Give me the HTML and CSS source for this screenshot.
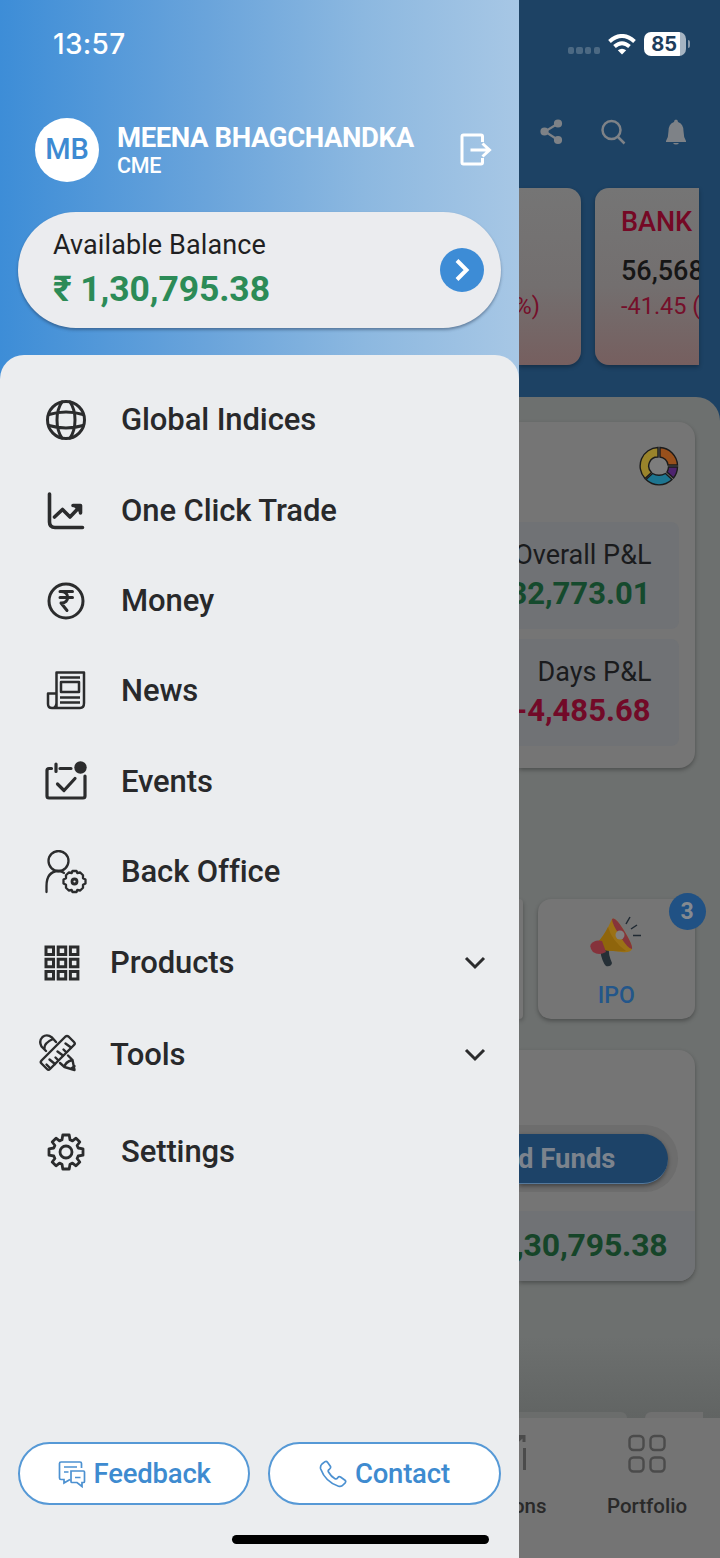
FILE: index.html
```
<!DOCTYPE html>
<html lang="en">
<head>
<meta charset="utf-8">
<title>Menu</title>
<link rel="stylesheet" href="styles.css">
</head>
<body>
<div class="phone">
  <aside class="drawer">
    <div class="time">13:57</div>
    <header class="profile">
      <div class="avatar">MB</div>
      <div class="who">
        <div class="name">MEENA BHAGCHANDKA</div>
        <div class="code">CME</div>
      </div>
      <svg class="logout" viewBox="0 0 32 34" fill="none" stroke="#fff" stroke-width="3"><path d="M22.500 9V3.500Q22.500 2 21 2H3.500Q2 2 2 3.500V29.500Q2 31 3.500 31H21Q22.500 31 22.500 29.500V25M10.500 17H29M22.500 10.500L29.500 17L22.500 23.500"/></svg>
    </header>
    <section class="balance">
      <div>
        <div class="balance-label">Available Balance</div>
        <div class="balance-value"><span class="rupee">₹</span> 1,30,795.38</div>
      </div>
      <div class="go"><svg width="44" height="44" viewBox="0 0 44 44" fill="none" stroke="#fff" stroke-width="4"><path d="M17 12.500L26.500 22L17 31.500"/></svg></div>
    </section>
    <nav class="menu">
      <a class="item"><svg class="icon" viewBox="0 0 44 44"><g stroke-width="3"><circle cx="22" cy="22" r="18.500"/><path d="M18 4Q13 11 13 22T18 40M26 4Q31 11 31 22T26 40M5 16.500Q22 11.500 39 16.500M5 27.500Q22 32.500 39 27.500"/></g></svg><span>Global Indices</span></a>
      <a class="item"><svg class="icon" viewBox="0 0 44 44"><g stroke-width="3.600"><path d="M5.500 5V33Q5.500 38.500 11 38.500H38.500M10.500 28L18.500 20.500L26 28L36 17.500M29 16.500H36.500V24"/><path d="M32 17.500L36 21.500" /></g></svg><span>One Click Trade</span></a>
      <a class="item"><svg class="icon" viewBox="0 0 44 44"><g stroke-width="3"><circle cx="22" cy="22" r="17"/><path d="M16 12.500H28.500M16 18.500H28.500M16.500 12.500C26 12 26 24.500 17 24L23 31.500"/></g></svg><span>Money</span></a>
      <a class="item"><svg class="icon" viewBox="0 0 44 44"><g stroke-width="2.500" stroke-linecap="butt"><path d="M12.500 38V3.500H40V34Q40 39 36 39H8Q4 39 4 35V24.500H12M12.500 34Q12 39 8 39"/><path d="M16 8.500H36M16 28.500H36M16 33.500H36"/><rect x="17" y="13" width="18" height="10"/></g></svg><span>News</span></a>
      <a class="item"><svg class="icon" viewBox="0 0 44 44"><g stroke-width="3.200"><path d="M7.500 8.500H5Q3 8.500 3 10.500V36Q3 38 5 38H39Q41 38 41 36V16M16 8.500H27M12 4V11.500"/><path d="M13.500 24L20 30.500L31 18.500"/></g><circle class="solid" cx="36.500" cy="7.500" r="6.200"/></svg><span>Events</span></a>
      <a class="item"><svg class="icon" viewBox="0 0 44 44"><g stroke-width="2.300"><circle cx="14.500" cy="11" r="10"/><path d="M2.500 42V36Q2.500 21.500 14.500 21Q18 21 20 23"/><circle cx="30.500" cy="31.500" r="2.500" stroke-width="2.800"/><path d="M28.500 21H32.500L33.300 23L36.200 22.500L39 25.300L39 28.200L41.500 29.500V33.500L39 34.800L39 37.700L36.200 40.500L33.300 40L32.500 42H28.500L27.700 40L24.800 40.500L22 37.700L22 34.800L19.500 33.500V29.500L22 28.200L22 25.300L24.800 22.500L27.700 23Z"/></g></svg><span>Back Office</span></a>
      <a class="item group"><svg class="icon" viewBox="0 0 44 44"><g stroke-width="3" stroke-linejoin="miter"><path d="M6 6h7.500v7.500h-7.500zM18.200 6h7.500v7.500h-7.500zM30.400 6h7.500v7.500h-7.500zM6 18.200h7.500v7.500h-7.500zM18.200 18.200h7.500v7.500h-7.500zM30.400 18.200h7.500v7.500h-7.500zM6 30.400h7.500v7.500h-7.500zM18.200 30.400h7.500v7.500h-7.500zM30.400 30.400h7.500v7.500h-7.500z"/></g></svg><span>Products</span><svg class="chev" viewBox="0 0 24 16"><path d="M3 3L12 12L21 3"/></svg></a>
      <a class="item group tools"><svg class="icon" viewBox="0 0 44 44"><g stroke-width="2.400"><path d="M29.500 3.500Q31 2.500 32.500 3.500L38 9Q39.500 10.500 38 12L14 36Q12.500 37.500 11 36L5.500 30.500Q4 29 5.500 27.500Z"/><path d="M14 35L10.500 31.500M19 31L13.500 26.500M22 27L19.500 24.500M27 22.500L21.500 18.500M30 19L27.500 16.500M35 14.500L29.500 10.500"/><path d="M10 18L5.500 13.500Q2.500 8 6.500 4Q11 0.500 16 4.500L20 9M8.500 15.500Q8 10 17 6"/><path d="M24 30L28.500 34L38.500 37L36.500 27L32 22.500M28.500 34Q29 29 36.500 27M35 36L38.500 33"/></g></svg><span>Tools</span><svg class="chev" viewBox="0 0 24 16"><path d="M3 3L12 12L21 3"/></svg></a>
      <a class="item last"><svg class="icon" viewBox="0 0 44 44"><g stroke-width="2.800"><circle cx="22" cy="22" r="6"/><path d="M18.800 5H25.200L26 9.800L28.500 10.900L32 8.200L35.800 12L33.100 15.500L34.200 18L39 18.800V25.200L34.200 26L33.100 28.500L35.800 32L32 35.800L28.500 33.100L26 34.200L25.200 39H18.800L18 34.200L15.500 33.100L12 35.800L8.200 32L10.900 28.500L9.800 26L5 25.200V18.800L9.800 18L10.900 15.500L8.200 12L12 8.200L15.500 10.900L18 9.800Z"/></g></svg><span>Settings</span></a>
      <div class="actions">
        <button class="pill"><svg width="28" height="28" viewBox="0 0 28 28"><path d="M12 19.500L6 23V19.500H3Q1.500 19.500 1.500 18V3.500Q1.500 2 3 2H22Q23.500 2 23.500 3.500V8M6 7H19M6 12H10.500M13 11H25.500Q26.500 11 26.500 12V21.500Q26.500 22.500 25.500 22.500H24V26.500L19 22.500H14Q13 22.500 13 21.500ZM17 17.500H22.500"/></svg>Feedback</button>
        <button class="pill"><svg width="28" height="28" viewBox="0 0 28 28"><path d="M3 4L6 1.700Q7.500 1 8.500 2.300L11.500 6.500Q12 8 10.500 9.200Q8.500 10.500 9.500 12Q12 16.500 16 18.700Q17.500 19.500 18.700 17.700Q20 16 21.500 17L26 20.200Q27.300 21.500 26.200 22.800L24 25Q22.500 27 19.500 26.200Q6.500 22 1.700 9Q0.900 6 3 4Z"/></svg>Contact</button>
      </div>
      <div class="home-bar"></div>
    </nav>
  </aside>

  <main class="page">
    <section class="top">
      <div class="status">
        <div class="dots"><i></i><i></i><i></i><i></i></div>
        <svg width="28" height="21" viewBox="0 0 28 21" fill="none" stroke="#fff" stroke-width="4"><path d="M1.500 7.500Q14 -3.500 26.500 7.500M6.500 12.500Q14 6 21.500 12.500"/><path d="M14 20.500L9.800 16.300Q14 13 18.200 16.300Z" fill="#fff" stroke="none"/></svg>
        <div class="battery">85</div><div class="tip"></div>
      </div>
      <div class="tools-row">
        <svg width="24" height="26" viewBox="0 0 24 26" fill="#7e8287" stroke="#7e8287" stroke-width="2.200"><path d="M18 4.500L5 12.500L18 21" fill="none"/><circle cx="18" cy="4.500" r="3"/><circle cx="4.500" cy="12.500" r="3"/><circle cx="18" cy="21" r="3"/></svg>
        <svg width="26" height="26" viewBox="0 0 26 26" fill="none" stroke="#7e8287" stroke-width="2.500"><circle cx="11.500" cy="11" r="9"/><path d="M17.500 17.500L24.500 24.500"/></svg>
        <svg width="22" height="26" viewBox="0 0 22 26" fill="#7e8287"><path d="M11 0.500Q13 0.500 13 3Q18.500 5 18.500 12Q18.500 18 21 22V23H1V22Q3.500 18 3.500 12Q3.500 5 9 3Q9 0.500 11 0.500ZM8 24H14Q13 25.500 11 25.500Q9 25.500 8 24Z"/></svg>
      </div>
      <div class="indices">
        <div class="index first"><span>%)</span></div>
        <div class="index second"><b>BANK</b><strong>56,568</strong><span>-41.45 (</span></div>
      </div>
    </section>
    <section class="content">
      <div class="card pnl">
        <svg class="donut" viewBox="0 0 40 40" stroke="#1b1b1b" stroke-width="1.400"><circle cx="20" cy="20" r="9.500" fill="#7d7d7d" stroke="none"/><path fill="#98501c" d="M21 1.500A18.500 18.500 0 0 1 38.500 19H29A9 9 0 0 0 21 11Z"/><path fill="#4d236e" d="M38.500 21A18 18 0 0 1 34.500 32L28 26Q29.500 23.500 29.500 21Z"/><path fill="#1d7590" d="M33 33.500A18.500 18.500 0 0 1 7 33.500L13.500 27.500Q20 31 26.500 27.500Z"/><path fill="#9a842b" d="M6 32.500A18.500 18.500 0 0 1 19 1.500V11A9 9 0 0 0 12.500 26.500Z"/></svg>
        <div class="box"><span>Overall P&amp;L</span><b class="green">32,773.01</b></div>
        <div class="box"><span>Days P&amp;L</span><b class="red">-4,485.68</b></div>
      </div>
      <div class="tiles">
        <div class="card stub"></div>
        <div class="card ipo">
          <svg width="52" height="52" viewBox="0 0 52 52"><path d="M10 34L19 32Q18 38 22 47Q21 51 16 50Q12 46 10 34Z" fill="#252f36"/><path d="M22 3Q25 0 33 13Q43 29 42 33Q40 37 32 36Q14 34 9 33L7 27Q15 19 22 3Z" fill="#9b7116"/><path d="M18 11Q22 25 36 35Q20 36 9 33L7 27Q14 20 18 11Z" fill="#8f650c"/><path d="M22 3Q25 0 33 13Q43 29 42 33Q38 33 30 20Q22 8 22 3Z" fill="#86343a"/><circle cx="30" cy="19" r="4.500" fill="#828080"/><path d="M1 28Q5 23 12 25L16 36Q9 40 3 36Q-1 31 1 28Z" fill="#85323b"/><g stroke="#202a33" stroke-width="1.500"><path d="M36 8L40 1M41 13L47 9M43 19.500H51"/></g></svg>
          <span>IPO</span>
          <div class="badge">3</div>
        </div>
      </div>
      <div class="card funds">
        <div class="ring"><div class="add">Add Funds</div></div>
        <div class="amount">₹ 1,30,795.38</div>
      </div>
      <div class="peek"><div class="peek-a"></div><div class="peek-b"></div></div>
    </section>
    <footer class="tabs">
      <div class="tab positions"><svg width="46" height="42" viewBox="0 0 46 42" fill="none" stroke="#4b4b4b" stroke-width="3"><path d="M4 40V28M17 40V24M30 40V26M43.500 40V18M4 24L18 15L27 20L41 7M36 6.500H43V12"/></svg><span>Positions</span></div>
      <div class="tab portfolio"><svg width="40" height="40" viewBox="0 0 40 40" fill="none" stroke="#4b4b4b" stroke-width="2.400"><rect x="2.500" y="2" width="14" height="14" rx="4"/><rect x="23.500" y="2" width="14" height="14" rx="4"/><rect x="2.500" y="23.500" width="14" height="14" rx="4"/><rect x="23.500" y="23.500" width="14" height="14" rx="4"/></svg><span>Portfolio</span></div>
    </footer>
  </main>
</div>
</body>
</html>
```
FILE: styles.css
```
* { box-sizing: border-box; }
body { margin: 0; font-family: Roboto, "Liberation Sans", sans-serif; }
svg { flex: none; display: block; }
.phone { display: flex; width: 720px; height: 1558px; overflow: hidden; }

/* Drawer */
.drawer { width: 518.5px; flex: none; display: flex; flex-direction: column; background: linear-gradient(90deg, #3d8dd7 0, #6aa4db 40%, #8cb8e0 70%, #a7c7e5 100%); }
.time { height: 88px; padding-left: 53px; font: 500 28px/88px Inter, sans-serif; color: #fff; letter-spacing: .3px; }
.profile { display: flex; align-items: center; height: 124px; padding: 0 27px 0 35px; color: #fff; }
.avatar { width: 64px; height: 64px; border-radius: 50%; background: #fff; color: #3d8ad2; font-size: 29px; font-weight: 500; line-height: 62px; text-align: center; }
.who { flex: 1; padding: 1px 0 0 18px; white-space: nowrap; }
.name { font-size: 27.500px; font-weight: 700; line-height: 30px; letter-spacing: -.4px; }
.code { font-size: 21.500px; font-weight: 500; line-height: 26px; letter-spacing: -.3px; }
.logout { width: 32px; height: 34px; }
.balance { display: flex; align-items: center; justify-content: space-between; height: 116px; margin: 0 18px 27px; padding: 0 17px 0 35px; border-radius: 58px; background: #ebecef; box-shadow: 0 2px 3px rgba(30, 50, 80, .45); }
.balance-label { padding-top: 2px; font-size: 27px; line-height: 36px; color: #1f1f22; letter-spacing: .1px; }
.balance-value { font-size: 35.500px; font-weight: 700; line-height: 52px; color: #2c8b57; letter-spacing: -.1px; }
.go { width: 44px; height: 44px; border-radius: 50%; background: #3d8cd6; }

.menu { flex: 1; display: flex; flex-direction: column; padding-top: 20px; border-radius: 24px 24px 0 0; background: #ebedef; }
.item { display: flex; align-items: center; height: 90.400px; padding-left: 44px; font-size: 31px; font-weight: 500; color: #28292b; letter-spacing: -.1px; }
.item span { flex: 1; padding-left: 33px; line-height: 36px; }
.icon { width: 44px; height: 44px; fill: none; stroke: #2b2c2d; stroke-linecap: round; stroke-linejoin: round; }
.icon .solid { fill: #2b2c2d; stroke: none; }
.item.group { height: 92px; padding: 0 32px 0 40px; }
.item.group span { padding-left: 26px; }
.item.tools { padding-left: 36px; }
.item.tools span { padding-left: 30px; }
.item.last { height: 101px; }
.chev { width: 24px; height: 16px; fill: none; stroke: #2b2c2d; stroke-width: 3; }
.actions { display: flex; gap: 18px; margin: auto 18px 0; }
.pill { flex: 1; display: flex; align-items: center; justify-content: center; gap: 8px; height: 63px; padding: 0; border: 2px solid #5699d6; border-radius: 32px; background: #fff; font: 500 27.500px Roboto, sans-serif; color: #3e8bd0; letter-spacing: -.2px; }
.pill svg { fill: none; stroke: #4c91d1; stroke-width: 1.700; }
.home-bar { width: 257px; height: 9px; margin: 30px 0 14px 231.5px; border-radius: 5px; background: #000; }

/* Dimmed page */
.page { flex: 1; min-width: 0; display: flex; flex-direction: column; background: #1d4264; overflow: hidden; }
.top { height: 397px; flex: none; }
.status { display: flex; align-items: center; height: 88px; padding-left: 49px; }
.dots { display: flex; gap: 2.500px; padding-top: 13px; margin-right: 8px; }
.dots i { width: 6.300px; height: 6.300px; border-radius: 2px; background: #4c6983; }
.battery { width: 42px; height: 24px; margin-left: 8px; border-radius: 7px; background: linear-gradient(90deg, #fff 36px, #a6b4c2 36px); font: 700 20px/25px Inter, sans-serif; color: #1d3d5c; padding-left: 7px; }
.tip { width: 2.500px; height: 8px; margin-left: 1.500px; border-radius: 0 4px 4px 0; background: #8698aa; }
.tools-row { display: flex; align-items: center; height: 88px; padding-left: 21px; }
.tools-row svg + svg { margin-left: 36px; }
.tools-row svg:last-child { margin-left: 39px; }
.indices { display: flex; gap: 14.500px; margin-top: 12px; height: 177px; }
.index { overflow: hidden; display: flex; flex-direction: column; white-space: nowrap; background: linear-gradient(#757575 0, #736f6f 55%, #765f5f 100%); box-shadow: 0 2px 4px rgba(0, 0, 0, .3); }
.index span { font-size: 23.500px; line-height: 32px; color: #750f2a; }
.index.first { width: 62px; border-radius: 0 14px 14px 0; }
.index.first span { display: flex; justify-content: flex-end; width: 21.500px; padding-top: 102px; }
.index.second { width: 104px; padding: 17px 0 0 26px; border-radius: 14px 0 0 14px; }
.index b { font-size: 27px; font-weight: 500; line-height: 34px; color: #750825; }
.index strong { padding-top: 15px; font-size: 27px; font-weight: 500; line-height: 34px; color: #161616; }
.index strong + span { padding-top: 2px; }
.content { flex: 1; padding: 25px 25.500px 0 0; border-radius: 0 24px 0 0; background: linear-gradient(#6d706f 92%, #616463 100%); display: flex; flex-direction: column; }
.card { background: #757575; border-radius: 0 16px 16px 0; box-shadow: 0 2px 4px rgba(0, 0, 0, .3); }
.pnl { height: 346px; padding: 24px 16px 0 0; }
.donut { width: 40px; height: 40px; margin: 0 0 36px auto; }
.box { display: flex; flex-direction: column; align-items: flex-end; height: 107px; margin-bottom: 10px; padding: 15px 27px 0 0; border-radius: 0 8px 8px 0; background: #707275; white-space: nowrap; }
.box span { font-size: 27px; line-height: 36px; color: #1a1b1d; }
.box b { padding-right: 1px; font-size: 31px; line-height: 42px; }
.green { color: #154a2d; }
.red { color: #720a28; }
.tiles { display: flex; gap: 15px; height: 120px; margin-top: 131px; }
.stub { width: 4.500px; border-radius: 0 12px 12px 0; }
.ipo { position: relative; flex: 1; display: flex; flex-direction: column; align-items: center; padding-top: 17px; border-radius: 13px; }
.ipo span { margin-top: 12px; font-size: 23px; font-weight: 500; line-height: 32px; color: #23568a; }
.badge { position: absolute; top: -6px; right: -11px; width: 37px; height: 37px; border-radius: 50%; background: #205184; color: #858a90; font-size: 23px; font-weight: 700; line-height: 37px; text-align: center; }
.funds { display: flex; flex-direction: column; height: 231px; margin-top: 31px; padding-top: 75px; overflow: hidden; }
.ring { display: flex; align-items: center; height: 67px; margin-right: 17px; padding-right: 10px; border-radius: 0 34px 34px 0; background: #6d6d6d; }
.add { flex: 1; min-width: 0; display: flex; justify-content: flex-end; height: 50px; padding-right: 52px; border-radius: 0 25px 25px 0; border-bottom: 1px solid #55799c; background: #1d4368; color: #7c838d; font-size: 27.500px; font-weight: 700; line-height: 49px; white-space: nowrap; box-shadow: 0 2px 4px rgba(0, 0, 0, .4); }
.amount { flex: 1; display: flex; justify-content: flex-end; margin-top: 19px; padding-right: 27px; background: #707275; font-size: 32px; font-weight: 700; line-height: 68px; color: #164529; letter-spacing: -.2px; white-space: nowrap; }
.peek { display: flex; height: 6px; margin: auto -9px 0 0; gap: 18px; }
.peek-a { width: 108px; border-radius: 0 14px 0 0; background: #6b6d6c; }
.peek-b { width: 58px; border-radius: 14px 0 0 0; background: #707070; }
.tabs { display: flex; flex: none; height: 140px; background: #747474; }
.tab { display: flex; flex-direction: column; align-items: center; font-size: 20.500px; font-weight: 500; color: #292929; }
.tab span { line-height: 28px; }
.positions { width: 56px; flex: none; align-items: flex-end; padding: 12px 28px 0 0; }
.positions svg { margin-right: 19.500px; }
.positions span { padding-top: 20px; }
.portfolio { width: 145px; padding-top: 16px; }
.portfolio span { padding-top: 18px; }
```
